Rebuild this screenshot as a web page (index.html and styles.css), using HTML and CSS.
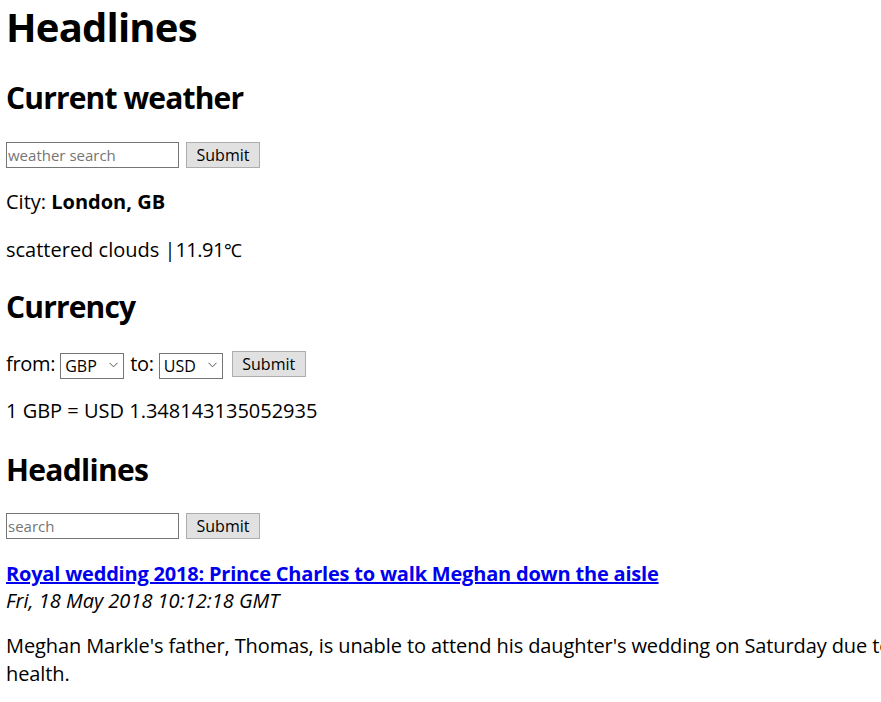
FILE: index.html
```html
<!DOCTYPE html>
<html lang="en">
<head>
<meta charset="utf-8">
<title>Headlines</title>
<link rel="stylesheet" href="styles.css">
</head>
<body>
<div class="page">
  <h1 class="title">Headlines</h1>

  <h2 class="section first">Current weather</h2>
  <form class="controls">
    <input class="field" type="text" placeholder="weather search">
    <button class="btn" type="button">Submit</button>
  </form>
  <p class="line">City: <b>London, GB</b></p>
  <p class="line">scattered clouds |<span class="temp">11.91</span><span class="deg">℃</span></p>

  <h2 class="section">Currency</h2>
  <form class="controls">
    <span class="label">from:</span>
    <span class="select-wrap">
      <select class="select"><option>GBP</option></select>
      <svg class="chev" width="9" height="6" viewBox="0 0 9 6"><path d="M0.5 0.8 L4.5 4.8 L8.5 0.8" fill="none" stroke="#555" stroke-width="1"/></svg>
    </span>
    <span class="label">to:</span>
    <span class="select-wrap">
      <select class="select"><option>USD</option></select>
      <svg class="chev" width="9" height="6" viewBox="0 0 9 6"><path d="M0.5 0.8 L4.5 4.8 L8.5 0.8" fill="none" stroke="#555" stroke-width="1"/></svg>
    </span>
    <button class="btn btn-convert" type="button">Submit</button>
  </form>
  <p class="line">1 GBP = USD 1.348143135052935</p>

  <h2 class="section last">Headlines</h2>
  <form class="controls">
    <input class="field" type="text" placeholder="search">
    <button class="btn" type="button">Submit</button>
  </form>

  <div class="article">
    <a class="headline" href="#">Royal wedding 2018: Prince Charles to walk Meghan down the aisle</a>
    <div class="date">Fri, 18 May 2018 10:12:18 GMT</div>
    <p class="summary">Meghan Markle's father, Thomas, is unable to attend his daughter's wedding on Saturday due to poor health.</p>
  </div>
</div>
</body>
</html>
```

FILE: styles.css
```css
html, body {
  margin: 0;
  padding: 0;
  background: #fff;
  overflow: hidden;
}

body {
  font-family: "Open Sans", "Noto Sans", sans-serif;
  font-size: 20px;
  line-height: 28px;
  color: #000;
}

.page {
  width: 990px;
  padding: 0 6px;
}

.title {
  font-size: 40px;
  line-height: 48px;
  font-weight: 700;
  letter-spacing: -0.8px;
  margin: 3px 0 29px;
}

.section {
  font-size: 30px;
  line-height: 36px;
  font-weight: 700;
  letter-spacing: -0.85px;
  margin: 25px 0 26px;
}

.section.last {
  letter-spacing: -0.7px;
  margin-top: 27px;
  margin-bottom: 25px;
}

.controls {
  display: flex;
  align-items: center;
  margin: 0;
  height: 26px;
}

.field {
  box-sizing: border-box;
  width: 173px;
  height: 26px;
  margin: 0 7px 0 0;
  padding: 0 1px;
  border: 1px solid #767676;
  border-radius: 0;
  font-family: "Open Sans", sans-serif;
  font-size: 15px;
  color: #000;
  outline: none;
}

.field::placeholder {
  color: #757575;
}

.btn {
  box-sizing: border-box;
  width: 74px;
  height: 26px;
  margin: 0;
  padding: 0;
  border: 1px solid #adadad;
  border-radius: 0;
  background: #e1e1e1;
  font-family: "Open Sans", sans-serif;
  font-size: 16px;
  color: #000;
}

.btn-convert {
  margin-left: 3px;
}

.label {
  margin-right: 5px;
  letter-spacing: -0.3px;
}

.select-wrap {
  position: relative;
  display: inline-block;
  width: 64px;
  height: 26px;
  margin-right: 6px;
}

.select {
  box-sizing: border-box;
  width: 64px;
  height: 26px;
  margin: 0;
  padding: 0 0 0 4px;
  border: 1px solid #767676;
  border-radius: 0;
  background: #fff;
  appearance: none;
  -webkit-appearance: none;
  font-family: "Open Sans", sans-serif;
  font-size: 16px;
  color: #000;
  outline: none;
}

.chev {
  position: absolute;
  right: 6px;
  top: 11px;
  pointer-events: none;
}

.line {
  margin: 20px 0;
}

.temp {
  letter-spacing: -0.5px;
}

.deg {
  display: inline-block;
  font-size: 18px;
  letter-spacing: 0;
}

.article {
  margin-top: 21px;
}

.headline {
  display: block;
  font-weight: 700;
  letter-spacing: -0.2px;
  color: #0000ee;
  text-decoration: underline;
}

.date {
  font-style: italic;
  line-height: 26px;
}

.summary {
  margin: 18px 0 0;
  line-height: 28px;
  letter-spacing: -0.1px;
}
```
